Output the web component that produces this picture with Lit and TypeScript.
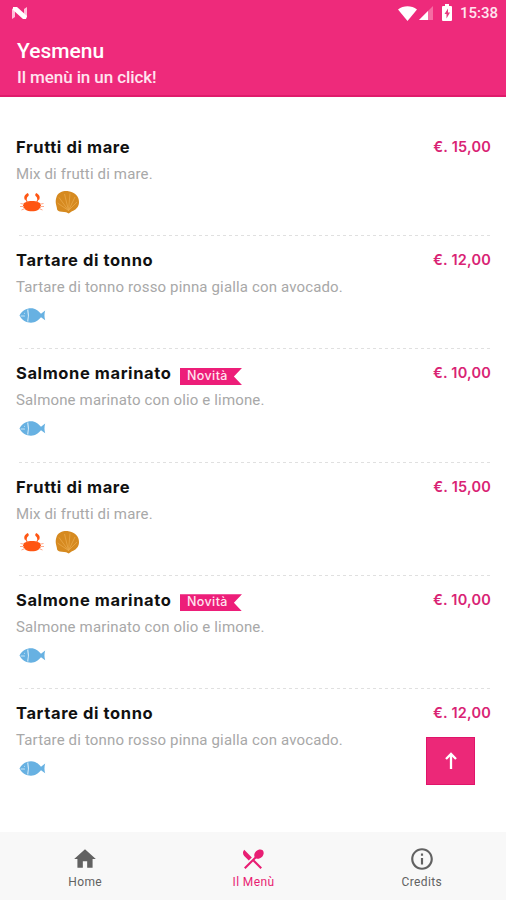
import { LitElement, html, css, svg } from "lit";
import { customElement, property } from "lit/decorators.js";

type Allergen = "crab" | "shell" | "fish";

interface Dish {
  name: string;
  description: string;
  price: string;
  icons: Allergen[];
  isNew?: boolean;
}

const seafood: Dish = { name: "Frutti di mare", description: "Mix di frutti di mare.", price: "€. 15,00", icons: ["crab", "shell"] };
const tuna: Dish = { name: "Tartare di tonno", description: "Tartare di tonno rosso pinna gialla con avocado.", price: "€. 12,00", icons: ["fish"] };
const salmon: Dish = { name: "Salmone marinato", description: "Salmone marinato con olio e limone.", price: "€. 10,00", icons: ["fish"], isNew: true };
const dishes: Dish[] = [seafood, tuna, salmon, seafood, salmon, tuna];

const crab = svg`
  <path d="M7 15.500c0-2.800 4-4.500 9-4.500s9 1.700 9 4.500c0 3.500-4 5.800-9 5.800s-9-2.300-9-5.800z" fill="#ff5613"/>
  <path d="M11.700 3c-3.200 1.600-4.200 4.400-2.700 7l1.900-.6c-.4-1.500.4-2.500 1.500-3.500.8-.8.300-2-.7-2.900zM20.300 3c3.200 1.600 4.200 4.400 2.700 7l-1.900-.6c.4-1.500-.4-2.500-1.500-3.500-.8-.8-.3-2 .7-2.900z" fill="#ff5613"/>
  <path d="M9.700 9l1.800 3.500M22.300 9l-1.800 3.500" stroke="#ff6a30" stroke-width="1.200" fill="none"/>
  <path d="M8 14.200l-3.500-.7M8 16.500H4M9 18.500l-3.500 1.500M24 14.200l3.500-.7M24 16.500h4M23 18.500l3.500 1.500" stroke="#ffa98a" stroke-width="1" fill="none"/>`;

const shell = svg`
  <path d="M5.500 7C7 2.500 12 .6 17.500 1.200c6 .6 10.600 5 10.500 11 0 4.800-3.500 7.800-7 9l-3.300 2.300-2.500-1.200-6.500-.9c-1.700-.2-3-1.800-2.800-3.500L5.200 15c-.8-2.500-.6-5.500.3-8z" fill="#d68a20"/>
  <path d="M17.500 20.500L8 7.500M17.500 20.500L13.500 4M17.500 20.500L19 3.500M17.500 20.500L24 7M17.500 20.500L26 12M17.500 20.500L6.500 13" stroke="#e8a84a" stroke-width=".8" fill="none"/>`;

const fish = svg`
  <path d="M3.500 12.500C6 7.500 10.500 5.200 15 5.200c4.500 0 7.500 2.500 10 5.500l4.200-3.200c-1 3.500-1 6.500 0 9.800L25 14.300c-2.500 3-5.500 5.400-10 5.400-4.500 0-9-2.200-11.500-7.200z" fill="#67b1e2"/>
  <path d="M11.700 6.500c1 3.800 1 8 0 12" stroke="#cfe8f8" stroke-width="1.200" fill="none"/>
  <path d="M5 13h3.500M8.500 10.200v.1" stroke="#c5e3f6" stroke-width="1.100" stroke-linecap="round"/>`;

const allergenArt = { crab, shell, fish };

@customElement("dish-row")
export class DishRow extends LitElement {
  @property({ attribute: false }) dish!: Dish;

  static styles = css`
    :host { display: block; box-sizing: border-box; height: 113.2px; padding-top: 12px; }
    .head { display: flex; align-items: center; height: 24px; }
    .name { font: 700 16.500px/24px Inter, sans-serif; letter-spacing: 0.6px; color: #111; white-space: nowrap; }
    .tag { height: 17px; width: 62px; margin: 6px 0 0 8.500px; box-sizing: border-box; padding-left: 7px; background: #ed1e79;
      clip-path: polygon(0 0, 100% 0, 87% 50%, 100% 100%, 0 100%);
      color: #ffe3ef; font: 500 12.500px/15px Inter, sans-serif; letter-spacing: 0.4px; }
    .price { margin-left: auto; font: 600 14.500px/24px Inter, sans-serif; letter-spacing: 0.2px; color: #d92374; white-space: nowrap; }
    .description { font: 400 15px/22px Roboto, sans-serif; letter-spacing: 0.15px; color: #a8a8a8; margin-top: 4px; white-space: nowrap; }
    .icons { display: flex; gap: 3px; height: 25px; margin-top: 5px; }
    .icon { width: 32px; height: 25px; }
  `;

  render() {
    const d = this.dish;
    return html`
      <div class="head">
        <span class="name">${d.name}</span>
        ${d.isNew ? html`<span class="tag">Novità</span>` : null}
        <span class="price">${d.price}</span>
      </div>
      <div class="description">${d.description}</div>
      <div class="icons">
        ${d.icons.map((i) => html`<svg class="icon" viewBox="0 0 32 25">${allergenArt[i]}</svg>`)}
      </div>`;
  }
}

@customElement("app-root")
export class AppRoot extends LitElement {
  static styles = css`
    :host { display: flex; flex-direction: column; position: relative; width: 506px; height: 900px; overflow: hidden;
      background: #fff; font-family: Roboto, sans-serif; }
    .top { flex: none; height: 97px; box-sizing: border-box; background: #ee2a7b; border-bottom: 2px solid #df1b6b; color: #fff; }
    .status { display: flex; align-items: center; height: 26px; padding: 0 8px 0 12px; }
    .status svg { display: block; }
    .n { width: 16px; height: 14px; margin-right: auto; }
    .wifi { width: 19px; height: 15px; }
    .cell { width: 14px; height: 14px; margin-left: 2px; }
    .battery { width: 10px; height: 17px; margin-left: 9px; margin-top: -2px; }
    .clock { width: 38px; margin-left: 8px; font: 500 15px/26px Roboto, sans-serif; color: #ffe4ef; white-space: nowrap; }
    .title { font-size: 21px; line-height: 26px; font-weight: 500; padding: 12px 0 0 17px; }
    .subtitle { font-size: 17px; line-height: 24px; padding: 1px 0 0 17px; color: #ffe4ef; font-weight: 500; letter-spacing: -0.1px; }
    .list { flex: 1; padding: 26px 15px 0 16px; }
    .rule { display: block; width: 472px; height: 1px; margin: -1px 0 0 3px;
      background: repeating-linear-gradient(90deg, #e0e0e0 0 3.500px, transparent 3.500px 6px); }
    .up { position: absolute; left: 426px; top: 737px; width: 49px; height: 48px; box-sizing: border-box; padding: 0; border: 1px solid #e0146a;
      background: #ec2878; display: grid; place-items: center; }
    .up svg { width: 14px; height: 20px; }
    .nav { flex: none; height: 68px; background: #f8f8f8; display: grid; grid-template-columns: repeat(3, 1fr); padding-left: 1px; }
    .tab { display: flex; flex-direction: column; align-items: center; padding-top: 14px; color: #626262; font-size: 12px; line-height: 16px; letter-spacing: 0.4px; }
    .tab svg { width: 26px; height: 26px; margin-bottom: 1.500px; fill: currentColor; }
    .active { color: #e81e73; }
  `;

  render() {
    return html`
      <header class="top">
        <div class="status">
          <svg class="n" viewBox="0 0 16 14"><path d="M0 3l3-2v10l-3 2zM12 3l3-2v10l-3 2z" fill="#ffc0da"/><path d="M1 1h4l10 9-1 3h-3L1 4z" fill="#fff"/></svg>
          <svg class="wifi" viewBox="0 0 19 15"><path d="M0 3.500C5.500-.9 13.500-.9 19 3.500L9.500 15z" fill="#fff"/></svg>
          <svg class="cell" viewBox="0 0 14 14"><path d="M0 14L14 0v14z" fill="#f56ca3"/><path d="M0 14L9 5v9z" fill="#fff"/></svg>
          <svg class="battery" viewBox="0 0 10 17"><path d="M1 2h2V0h4v2h2q1 0 1 1v13q0 1-1 1H1q-1 0-1-1V3q0-1 1-1z" fill="#fff"/><path d="M6 4.500L2.500 10h2v4.500L8 8.500H6z" fill="#e73a80"/></svg>
          <span class="clock">15:38</span>
        </div>
        <div class="title">Yesmenu</div>
        <div class="subtitle">Il menù in un click!</div>
      </header>
      <main class="list">
        ${dishes.map((d, i) => html`
          <dish-row .dish=${d}></dish-row>
          ${i < dishes.length - 1 ? html`<span class="rule"></span>` : null}`)}
      </main>
      <button class="up" aria-label="Torna su">
        <svg viewBox="0 0 14 20"><path d="M7 18V3M2 8l5-5 5 5" fill="none" stroke="#fff" stroke-width="2.300"/></svg>
      </button>
      <nav class="nav">
        <div class="tab">
          <svg viewBox="0 0 24 24"><path d="M10 20v-6h4v6h5v-8h3L12 3 2 12h3v8z"/></svg>
          <span>Home</span>
        </div>
        <div class="tab active">
          <svg viewBox="0 0 24 24"><path d="M8.100 13.340l2.830-2.830L3.910 3.500a4.008 4.008 0 0 0 0 5.660l4.190 4.180zm6.780-1.810c1.530.71 3.680.21 5.270-1.380 1.910-1.910 2.280-4.650.81-6.120-1.460-1.460-4.200-1.100-6.120.81-1.590 1.590-2.090 3.740-1.380 5.270L3.700 19.870l1.410 1.410L12 14.410l6.880 6.880 1.410-1.410L13.410 13l1.470-1.470z"/></svg>
          <span>Il Menù</span>
        </div>
        <div class="tab">
          <svg viewBox="0 0 24 24"><path d="M11 17h2v-6h-2v6zm1-15C6.480 2 2 6.480 2 12s4.480 10 10 10 10-4.480 10-10S17.520 2 12 2zm0 18c-4.410 0-8-3.590-8-8s3.590-8 8-8 8 3.590 8 8-3.590 8-8 8zM11 9h2V7h-2v2z"/></svg>
          <span>Credits</span>
        </div>
      </nav>`;
  }
}
